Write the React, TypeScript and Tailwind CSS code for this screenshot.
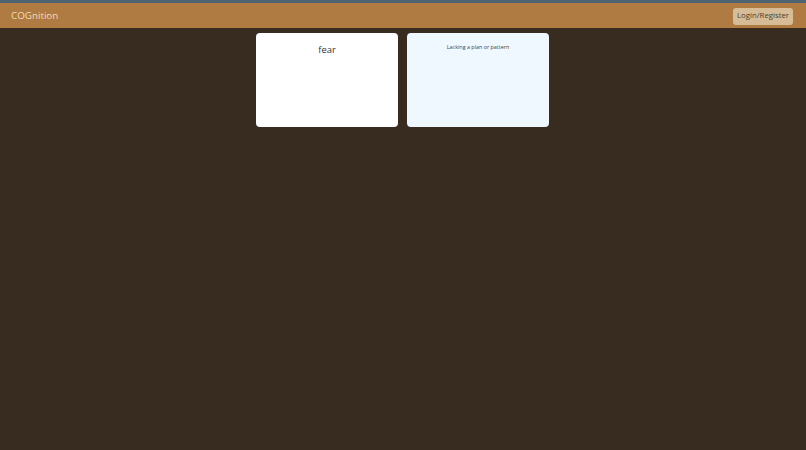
import React from 'react';

export default function App() {
  const cards = [
    { text: 'fear', back: false },
    { text: 'Lacking a plan or pattern', back: true },
  ];

  return (
    <div className="min-h-screen w-full bg-[#382c21] font-['Open_Sans',sans-serif]">
      <div className="h-[3px] bg-[#4b6373]" />
      <nav className="flex h-[25px] items-center justify-between bg-[#b07a43] pl-[11px] pr-[13px]">
        <span className="pt-[1px] text-[9.8px] text-[#f3dcb6]">COGnition</span>
        <button className="mt-[1px] h-[17px] w-[60px] rounded-[3px] bg-[#d6bd97] text-[7.8px] text-[#4c3d2c]">
          Login/Register
        </button>
      </nav>
      <main className="flex justify-center gap-[9px] pt-[5px] pr-[1px]">
        {cards.map((card) => (
          <div
            key={card.text}
            className={`flex h-[94px] w-[142px] justify-center rounded-[4px] ${
              card.back ? 'bg-[#eff7ff] pt-[10px]' : 'bg-white pt-[10px]'
            }`}
          >
            <span
              className={
                card.back ? 'text-[5.4px] text-[#444]' : 'text-[9.4px] text-[#333]'
              }
            >
              {card.text}
            </span>
          </div>
        ))}
      </main>
    </div>
  );
}
